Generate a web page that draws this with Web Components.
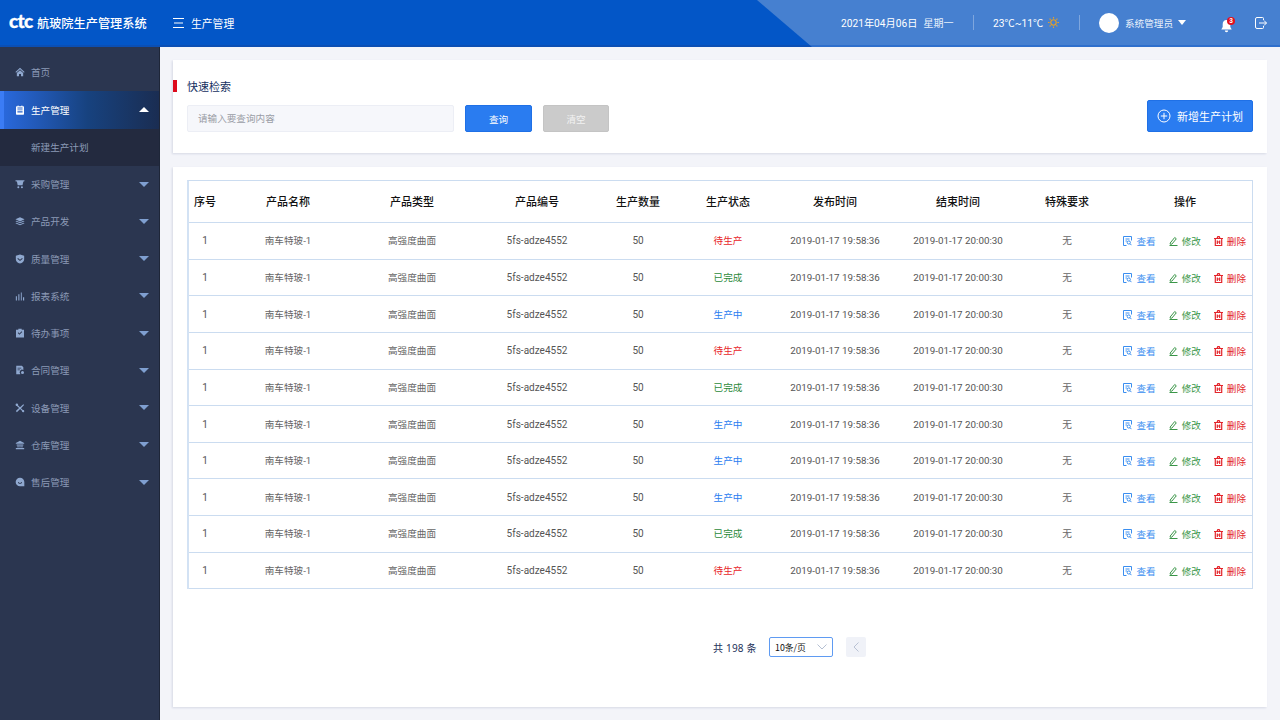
<!DOCTYPE html>
<html lang="zh-CN">
<head>
<meta charset="utf-8">
<title>航玻院生产管理系统</title>
<style>
  html, body { margin: 0; height: 100%; }
  body {
    width: 1280px; height: 720px; overflow: hidden;
    display: flex; flex-direction: column;
    background: #f3f4f9;
    font-family: "Noto Sans CJK SC", "Noto Sans", sans-serif;
  }
  .body-row { display: flex; flex: 1; min-height: 0; }
</style>
</head>
<body>
<app-header></app-header>
<div class="body-row">
  <side-nav>
    <nav-item icon="home">首页</nav-item>
    <nav-item icon="list" active>生产管理</nav-item>
    <nav-sub>新建生产计划</nav-sub>
    <nav-item icon="cart" caret>采购管理</nav-item>
    <nav-item icon="layers" caret>产品开发</nav-item>
    <nav-item icon="shield" caret>质量管理</nav-item>
    <nav-item icon="chart" caret>报表系统</nav-item>
    <nav-item icon="todo" caret>待办事项</nav-item>
    <nav-item icon="contract" caret>合同管理</nav-item>
    <nav-item icon="tools" caret>设备管理</nav-item>
    <nav-item icon="bank" caret>仓库管理</nav-item>
    <nav-item icon="chat" caret>售后管理</nav-item>
  </side-nav>
  <main-area>
    <search-panel></search-panel>
    <plan-table></plan-table>
  </main-area>
</div>

<script>
const ICONS = {
  home: '<path d="M6 1 .5 6l.8.8L6 2.7l4.700 4.100.8-.8z"/><path d="M2.200 7.300 6 4l3.800 3.300V11H7.200V8.300H4.800V11H2.200z"/>',
  list: '<path fill-rule="evenodd" d="M2 1.500h1.200V.6h1v.9h3.600V.6h1v.9H10a.8.8 0 0 1 .8.8v8.600a.8.8 0 0 1-.8.8H2a.8.8 0 0 1-.8-.8V2.300A.8.8 0 0 1 2 1.500zm.9 1.400v1.300h6.200V2.900zm0 2.500v1h6.200v-1zm0 2.200v1.300h6.200V7.600z"/>',
  cart: '<path d="M.5 1.500h11l-.6 1.400H10L9 7.500H3.200L2.300 2.900H.8z"/><circle cx="4" cy="9.800" r="1.200"/><circle cx="8.300" cy="9.800" r="1.200"/>',
  layers: '<path d="M6 1.500 11.500 4 6 6.500.5 4z"/><path d="M1.800 5.700 6 7.600l4.200-1.900 1.300.6L6 8.800.5 6.300z"/><path d="M1.800 8 6 9.900 10.200 8l1.300.6L6 11.100.5 8.600z"/>',
  shield: '<path fill-rule="evenodd" d="M6 .7 11 2v4.200c0 2.700-2.100 4.400-5 5.300-2.900-.9-5-2.600-5-5.300V2zM3.600 4.800l2.400 2 2.500-2 .8.9L6 8.300 2.800 5.700z"/>',
  chart: '<path d="M1 6h1.300v5H1zM4 3.500h1.300V11H4zM7 1.500h1.100V11H7zM9.600 7H11v4H9.600z" transform="translate(0 .4)"/>',
  todo: '<path fill-rule="evenodd" d="M1.200 2H4V.9h4V2h2.800v9.300H1.200zm2.100 4 2 2 3.400-3.200-.7-.8-2.700 2.500-1.300-1.300z"/>',
  contract: '<path fill-rule="evenodd" d="M1.500.8h6.700L10 2.600V6a3 3 0 0 0-3.700 4.600v.6H1.500zM3 3.200v1h4.500v-1zm0 2.200v1h2.800v-1z"/><circle cx="9" cy="9" r="1.800"/>',
  tools: '<path d="M1.800 1 6 5.200 10 1.500l.9.9-3.700 4L11 10l-1 1-3.900-3.700L2.300 11 1 9.700l3.900-3.600L1 2.500z"/><circle cx="2.200" cy="2.200" r="1.500"/><circle cx="9.800" cy="9.800" r="1.300"/>',
  bank: '<path d="M6 1 11 3.600v1H1v-1z"/><path d="M2 5.500h8v1H2zM3 7h1.300v2H3zM5.400 7h1.200v2H5.400zM7.700 7H9v2H7.700zM1 9.600h10V11H1z"/>',
  chat: '<path fill-rule="evenodd" d="M6 .8a5.200 5.200 0 0 1 5.200 5.200c0 1 0 4.500 0 5.200H6A5.200 5.200 0 1 1 6 .8zM3.500 6.200c.4 1.300 1.300 2 2.500 2s2.100-.7 2.500-2L7.600 6c-.3.800-.8 1.200-1.600 1.200S4.700 6.800 4.400 6z"/>'
};

class AppHeader extends HTMLElement {
  connectedCallback() {
    this.attachShadow({ mode: 'open' });
    this.shadowRoot.innerHTML = `
      <style>
        :host {
          display: flex; align-items: center; flex: none;
          position: relative; height: 45px;
          background: #0356c7; border-bottom: 2px solid #0b4fb4;
          color: #fff; font-size: 10.800px; z-index: 2;
        }
        .panel {
          position: absolute; top: 0; bottom: -2px; right: 0; width: 523px;
          background: linear-gradient(#4680d0 45px, #2f6fcc 45px);
          clip-path: polygon(0 0, 100% 0, 100% 100%, 55px 100%);
        }
        .logo { position: relative; display: flex; align-items: center; margin-left: 9px; width: 164px; font-size: 12.200px; font-weight: 500; }
        .ctc {
          font-family: "Lato", sans-serif; font-weight: 900; font-size: 19px;
          -webkit-text-stroke: .3px #fff;
          letter-spacing: -.6px; line-height: 20px; width: 28px; margin-top: -3px; flex: none;
        }
        .crumb { position: relative; display: flex; align-items: center; gap: 7px; }
        .crumb svg { display: block; }
        .tools { position: relative; margin-left: auto; display: flex; align-items: center; height: 100%; }
        .num { font-family: "Roboto", "Noto Sans CJK SC", sans-serif; }
        .date { width: 132px; font-size: 10.200px; white-space: nowrap; }
        .date span { margin-left: 6px; font-size: 10px; color: #e8f0fb; }
        .sep { width: 1px; height: 15px; background: #7ea6de; flex: none; }
        .temp { display: flex; align-items: center; gap: 5px; margin-left: 19px; width: 86px; font-size: 10.200px; }
        .user { display: flex; align-items: center; margin-left: 19px; font-size: 9.600px; color: #edf3fc; }
        .avatar { width: 20px; height: 20px; border-radius: 50%; background: #fff; margin-right: 6px; }
        .caret { width: 0; height: 0; margin-left: 5px; border: 4px solid transparent; border-top: 5px solid #fff; border-bottom: 0; }
        .bell { position: relative; margin-left: 34px; width: 16px; height: 16px; }
        .badge {
          position: absolute; top: 2px; left: 7px; width: 8px; height: 8px; border-radius: 50%;
          background: #e3101e; font-size: 6.500px; line-height: 8px; text-align: center; color: #fff;
          font-family: "Liberation Sans", sans-serif; font-weight: 700;
        }
        .exit { margin: 0 13px 0 19px; display: block; }
      </style>
      <div class="panel"></div>
      <div class="logo"><span class="ctc">ctc</span><span>航玻院生产管理系统</span></div>
      <div class="crumb">
        <svg width="11" height="10" viewBox="0 0 11 10" stroke="#fff" stroke-width="1"><path d="M0 .5h11M1 5h9M0 9.500h11"/></svg>
        <span>生产管理</span>
      </div>
      <div class="tools">
        <div class="date num">2021年04月06日<span>星期一</span></div>
        <div class="sep"></div>
        <div class="temp num">23℃~11℃
          <svg width="11" height="11" viewBox="0 0 11 11" fill="none" stroke="#eaa021" stroke-width="1.100"><circle cx="5.500" cy="5.500" r="2.700"/><path d="M5.500 0v1.500M5.500 9.500V11M0 5.500h1.500M9.500 5.500H11M1.600 1.600l1 1M8.400 8.400l1 1M1.600 9.400l1-1M8.400 2.600l1-1"/></svg>
        </div>
        <div class="sep"></div>
        <div class="user"><div class="avatar"></div>系统管理员<div class="caret"></div></div>
        <div class="bell">
          <svg width="13" height="14" viewBox="0 0 13 14" fill="#fff" style="display:block;margin-top:4px"><path d="M6.500 1C9 1 10.300 2.900 10.300 5.200V8l1.400 2.500H1.300L2.700 8V5.200C2.700 2.900 4 1 6.500 1zM4.800 11.500h3.400a1.700 1.700 0 0 1-3.400 0z"/></svg>
          <div class="badge">3</div>
        </div>
        <svg class="exit" width="12" height="12" viewBox="0 0 12 12" fill="none" stroke="#fff" stroke-width="1"><path d="M8.500 3V1.500a1 1 0 0 0-1-1H2a1.500 1.500 0 0 0-1.500 1.500v8A1.500 1.500 0 0 0 2 11.500h5.500a1 1 0 0 0 1-1V9M4 6h7.500M9 3.500 11.500 6 9 8.500"/></svg>
      </div>`;
  }
}

class SideNav extends HTMLElement {
  connectedCallback() {
    this.attachShadow({ mode: 'open' });
    this.shadowRoot.innerHTML = `
      <style>
        :host {
          display: flex; flex-direction: column; flex: none;
          width: 159px; padding-top: 7.200px;
          background: #2b3650; border-right: 1px solid #1e2638;
        }
      </style>
      <slot></slot>`;
  }
}

class NavItem extends HTMLElement {
  connectedCallback() {
    const active = this.hasAttribute('active');
    const caret = this.hasAttribute('caret') || active;
    this.attachShadow({ mode: 'open' });
    this.shadowRoot.innerHTML = `
      <style>
        :host {
          display: flex; align-items: center; flex: none;
          height: 37.270px; box-sizing: border-box; padding: 0 0 1px 15px;
          font-size: 9.600px; color: #8b9ab6;
        }
        :host([active]) {
          color: #fff;
          background: linear-gradient(90deg, #2a6ae0 0, #17427f 55%, #1a2d52 100%);
          box-shadow: inset 4px 0 0 #3b7cf5;
        }
        svg { fill: #8fa8cf; flex: none; margin-right: 6px; display: block; }
        :host([active]) svg { fill: #fff; }
        .arrow {
          margin-left: auto; margin-right: 10px; width: 0; height: 0;
          border-left: 5px solid transparent; border-right: 5px solid transparent;
          border-top: 5px solid #7f9fd0;
        }
        :host([active]) .arrow { border-top: 0; border-bottom: 5px solid #fff; }
      </style>
      <svg width="10" height="10" viewBox="0 0 12 12">${ICONS[this.getAttribute('icon')]}</svg>
      <slot></slot>
      ${caret ? '<div class="arrow"></div>' : ''}`;
  }
}

class NavSub extends HTMLElement {
  connectedCallback() {
    this.attachShadow({ mode: 'open' });
    this.shadowRoot.innerHTML = `
      <style>
        :host {
          display: flex; align-items: center; flex: none; box-sizing: border-box;
          height: 37.270px; padding: 0 0 1px 31px;
          background: #232a3f; color: #8b9ab6; font-size: 9.600px;
        }
      </style>
      <slot></slot>`;
  }
}

class MainArea extends HTMLElement {
  connectedCallback() {
    this.attachShadow({ mode: 'open' });
    this.shadowRoot.innerHTML = `
      <style>
        :host {
          display: flex; flex-direction: column; gap: 14px; flex: 1;
          min-width: 0; padding: 13px 13px 13px 13px;
        }
      </style>
      <slot></slot>`;
  }
}

class SearchPanel extends HTMLElement {
  connectedCallback() {
    this.attachShadow({ mode: 'open' });
    this.shadowRoot.innerHTML = `
      <style>
        :host {
          display: block; position: relative; height: 93px; box-sizing: border-box;
          padding: 20px 14px 0; background: #fff;
          box-shadow: -1px 1px 2px rgba(40,60,110,.14);
        }
        .title { position: relative; height: 20px; font-size: 11px; line-height: 13px; color: #15305f; }
        .title::before {
          content: ''; position: absolute; left: -14px; top: 0; width: 4px; height: 12px; background: #dd0a1c;
        }
        .bar { display: flex; align-items: flex-end; }
        .input {
          width: 255px; height: 25px; padding-left: 10px; line-height: 25px;
          background: #f6f7fb; border: 1px solid #eceef5; border-radius: 2px;
          font-size: 9.600px; color: #9a9da6; margin-right: 11px;
        }
        button {
          font: inherit; font-size: 9.600px; color: #fff; width: 67px; height: 27px;
          border-radius: 2px; border: 1px solid #1f70e6; background: #2a7cf0; padding: 0;
        }
        button.off { margin-left: 11px; width: 66px; background: #cbcbcb; border-color: #c4c4c4; color: #f2f2f2; }
        button.add {
          margin-left: auto; width: 106px; height: 32px; position: relative; top: 0;
          display: flex; align-items: center; justify-content: center; gap: 6px; font-size: 11px;
        }
      </style>
      <div class="title">快速检索</div>
      <div class="bar">
        <div class="input">请输入要查询内容</div>
        <button>查询</button>
        <button class="off">清空</button>
        <button class="add">
          <svg width="14" height="14" viewBox="0 0 14 14" fill="none" stroke="#fff" stroke-width="1"><circle cx="7" cy="7" r="6"/><path d="M7 3.800v6.400M3.800 7h6.400"/></svg>
          新增生产计划
        </button>
      </div>`;
  }
}

const COLS = '34px 130px 118px 132px 70px 110px 104px 142px 76px 1fr';
const STATUS = {
  wait: ['待生产', '#e8262a'],
  done: ['已完成', '#2c8a3b'],
  doing: ['生产中', '#2a7cf0']
};

class PlanRow extends HTMLElement {
  connectedCallback() {
    const [label, color] = STATUS[this.getAttribute('status')];
    this.attachShadow({ mode: 'open' });
    this.shadowRoot.innerHTML = `
      <style>
        :host {
          display: grid; grid-template-columns: ${COLS}; align-items: center;
          height: 36.650px; box-sizing: border-box; padding-bottom: 1px;
          border-bottom: 1px solid #cbdcf0;
          font-size: 9.600px; color: #666; text-align: center;
        }
        .latin { font-family: "Roboto", "Noto Sans CJK SC", sans-serif; font-size: 10px; color: #555; margin-top: 1px; }
        .time { font-size: 9.800px; }
        .first { padding-right: 2px; }
        .mixed { font-family: "Roboto", "Noto Sans CJK SC", sans-serif; }
        .ops { display: flex; justify-content: flex-end; gap: 13px; padding-right: 6px; margin-top: 2px; }
        .op { display: flex; align-items: center; gap: 4px; }
        .op svg { display: block; }
      </style>
      <div class="latin first">1</div>
      <div class="mixed">南车特玻-1</div>
      <div>高强度曲面</div>
      <div class="latin">5fs-adze4552</div>
      <div class="latin">50</div>
      <div style="color:${color}">${label}</div>
      <div class="latin time">2019-01-17 19:58:36</div>
      <div class="latin time">2019-01-17 20:00:30</div>
      <div>无</div>
      <div class="ops">
        <div class="op" style="color:#3a8ef0">
          <svg width="9" height="10" viewBox="0 0 9 10" fill="none" stroke="#3a8ef0"><path d="M8.500 4.500V.5H.5v9h3M2.500 3h4M2.500 5h1.500"/><circle cx="5.800" cy="6.500" r="1.600"/><path d="M7 7.700 8.500 9.200"/></svg>查看
        </div>
        <div class="op" style="color:#3a9648">
          <svg width="9" height="10" viewBox="0 0 9 10" fill="none" stroke="#3a9648"><path d="M1.200 7 5.700 1.500l1.600 1.300L2.800 8.200H1.200zM.5 9.500h8"/></svg>修改
        </div>
        <div class="op" style="color:#e3252b">
          <svg width="9" height="10" viewBox="0 0 9 10" fill="none" stroke="#e3252b" stroke-width="1.200"><path d="M0 2.500h9M3 2.500l.8-1.800h1.400L6 2.500M1.300 2.500V9.500h6.400V2.500M3.300 4.500v3.500M5.700 4.500v3.500M3 6h3"/></svg>删除
        </div>
      </div>`;
  }
}

class PlanTable extends HTMLElement {
  connectedCallback() {
    const heads = ['序号', '产品名称', '产品类型', '产品编号', '生产数量', '生产状态', '发布时间', '结束时间', '特殊要求', '操作'];
    const rows = ['wait', 'done', 'doing', 'wait', 'done', 'doing', 'doing', 'doing', 'done', 'wait'];
    this.attachShadow({ mode: 'open' });
    this.shadowRoot.innerHTML = `
      <style>
        :host {
          display: flex; flex-direction: column; flex: 1; min-height: 0;
          box-sizing: border-box; padding: 13px 14px 0; background: #fff;
          box-shadow: -1px 1px 2px rgba(40,60,110,.14);
        }
        .table { border: 1px solid #cbdcf0; border-left: 2px solid #d3e2f4; border-bottom: 0; }
        .head {
          display: grid; grid-template-columns: ${COLS}; align-items: center;
          height: 42px; box-sizing: border-box; padding-bottom: 2px; border-bottom: 1px solid #cbdcf0;
          font-size: 11px; color: #111; text-align: center; font-weight: 500;
        }
        .head div:first-child { padding-right: 2px; }
        .head div:last-child { padding-left: 13px; }
      </style>
      <div class="table">
        <div class="head">${heads.map(h => `<div>${h}</div>`).join('')}</div>
        ${rows.map(s => `<plan-row status="${s}"></plan-row>`).join('')}
      </div>
      <plan-pager></plan-pager>`;
  }
}

class PlanPager extends HTMLElement {
  connectedCallback() {
    this.attachShadow({ mode: 'open' });
    this.shadowRoot.innerHTML = `
      <style>
        :host {
          display: flex; align-items: center; margin-top: 48px; padding-left: 526px;
          font-size: 10px; color: #24335a;
        }
        .total { width: 56px; font-family: "Noto Sans", "Noto Sans CJK SC", sans-serif; white-space: nowrap; letter-spacing: .2px; }
        .select {
          display: flex; align-items: center; justify-content: space-between;
          box-sizing: border-box; width: 64px; height: 20px; padding: 0 5px 0 5px;
          border: 1px solid #5f9bf2; border-radius: 2px; color: #111; font-size: 8.800px;
        }
        .prev {
          display: flex; align-items: center; justify-content: center;
          width: 20px; height: 20px; margin-left: 13px; border-radius: 2px; background: #f0f2f8;
        }
        svg { display: block; }
      </style>
      <div class="total">共 198 条</div>
      <div class="select">10条/页
        <svg width="10" height="6" viewBox="0 0 10 6" fill="none" stroke="#b4bfd2"><path d="M.5.500 5 5 9.500.5"/></svg>
      </div>
      <div class="prev"><svg width="6" height="10" viewBox="0 0 6 10" fill="none" stroke="#b9c2d4"><path d="M5.500.5 1 5l4.500 4.500"/></svg></div>`;
  }
}

customElements.define('app-header', AppHeader);
customElements.define('side-nav', SideNav);
customElements.define('nav-item', NavItem);
customElements.define('nav-sub', NavSub);
customElements.define('main-area', MainArea);
customElements.define('search-panel', SearchPanel);
customElements.define('plan-row', PlanRow);
customElements.define('plan-table', PlanTable);
customElements.define('plan-pager', PlanPager);
</script>
</body>
</html>
